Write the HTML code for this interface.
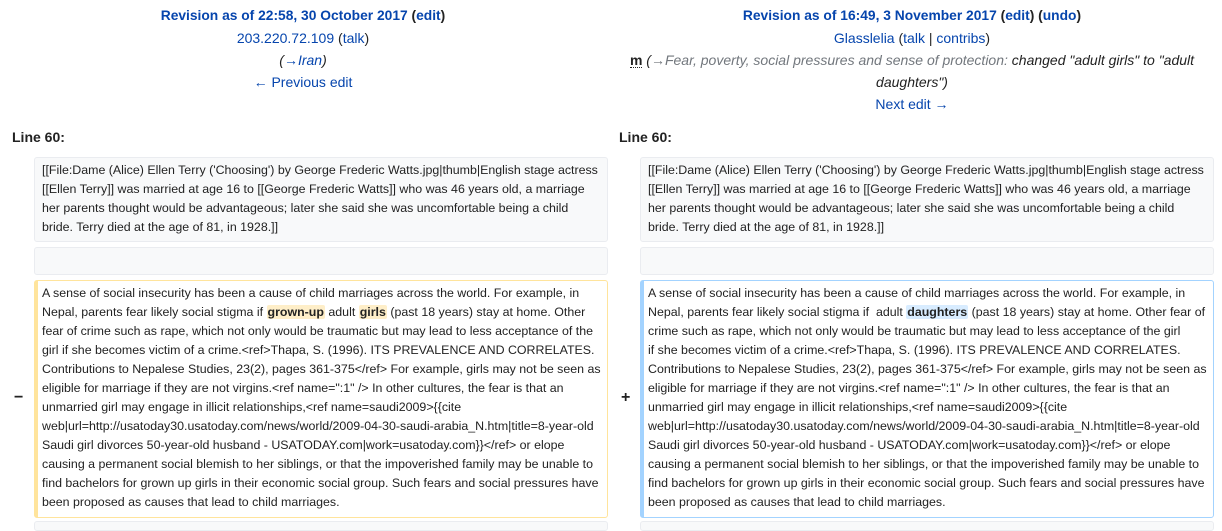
<!DOCTYPE html>
<html><head><meta charset="utf-8"><style>
body{margin:0;width:1222px;height:523px;overflow:hidden;background:#fff;font-family:"Liberation Sans",sans-serif;color:#222;font-size:14px;position:relative}
a{color:#0645ad;text-decoration:none}
.t{position:absolute;text-align:center;line-height:22px;font-size:14px}
.t b{font-size:13.8px}
.ln{position:absolute;font-weight:bold;font-size:14px}
.box{position:absolute;box-sizing:border-box;border:1px solid #eaecf0;border-radius:3px;background:#f8f9fa;font-size:12.4px;line-height:19px;padding:3px 7px;white-space:nowrap;overflow:hidden}
.del{background:#fff;border-color:#ffe49c;border-left-width:4px;padding-left:4px}
.add{background:#fff;border-color:#a3d3ff;border-left-width:4px;padding-left:4px}
.hd{background:#feeec8;font-weight:bold;border-radius:2px;padding:0 1px}
.ha{background:#d8ecff;font-weight:bold;border-radius:2px;padding:0 1px}
.m{position:absolute;font-weight:bold;font-size:16px}
</style></head><body>
<div class="t" style="left:0;width:606px;top:4px"><b><a>Revision as of 22:58, 30 October 2017</a> (<a>edit</a>)</b><br><a>203.220.72.109</a> (<a>talk</a>)<br><i>(<a>→Iran</a>)</i><br><a>← Previous edit</a></div>
<div class="t" style="left:612px;width:600px;top:4px"><b><a>Revision as of 16:49, 3 November 2017</a> (<a>edit</a>) (<a>undo</a>)</b><br><a>Glasslelia</a> (<a>talk</a> | <a>contribs</a>)<br><b style="border-bottom:1px dotted #222;line-height:14px;display:inline-block;font-size:14px">m</b> <i>(<a style="color:#72777d">→Fear, poverty, social pressures and sense of protection:</a> changed "adult girls" to "adult<br>daughters")</i><br><a>Next edit →</a></div>
<div class="ln" style="left:12px;top:129px">Line 60:</div>
<div class="ln" style="left:619px;top:129px">Line 60:</div>
<div class="box" style="left:34px;top:157px;width:574px;height:85px">[[File:Dame (Alice) Ellen Terry ('Choosing') by George Frederic Watts.jpg|thumb|English stage actress<br>[[Ellen Terry]] was married at age 16 to [[George Frederic Watts]] who was 46 years old, a marriage<br>her parents thought would be advantageous; later she said she was uncomfortable being a child<br>bride. Terry died at the age of 81, in 1928.]]</div>
<div class="box" style="left:640px;top:157px;width:574px;height:85px">[[File:Dame (Alice) Ellen Terry ('Choosing') by George Frederic Watts.jpg|thumb|English stage actress<br>[[Ellen Terry]] was married at age 16 to [[George Frederic Watts]] who was 46 years old, a marriage<br>her parents thought would be advantageous; later she said she was uncomfortable being a child<br>bride. Terry died at the age of 81, in 1928.]]</div>
<div class="box" style="left:34px;top:247px;width:574px;height:28px"></div>
<div class="box" style="left:640px;top:247px;width:574px;height:28px"></div>
<div class="m" style="left:14px;top:389px">−</div>
<div class="m" style="left:621px;top:389px">+</div>
<div class="box del" style="left:34px;top:280px;width:574px;height:238px">A sense of social insecurity has been a cause of child marriages across the world. For example, in<br>Nepal, parents fear likely social stigma if <span class="hd">grown-up</span> adult <span class="hd">girls</span> (past 18 years) stay at home. Other<br>fear of crime such as rape, which not only would be traumatic but may lead to less acceptance of the<br>girl if she becomes victim of a crime.&lt;ref&gt;Thapa, S. (1996). ITS PREVALENCE AND CORRELATES.<br>Contributions to Nepalese Studies, 23(2), pages 361-375&lt;/ref&gt; For example, girls may not be seen as<br>eligible for marriage if they are not virgins.&lt;ref name=":1" /&gt; In other cultures, the fear is that an<br>unmarried girl may engage in illicit relationships,&lt;ref name=saudi2009&gt;{{cite<br>web|url=http://usatoday30.usatoday.com/news/world/2009-04-30-saudi-arabia_N.htm|title=8-year-old<br>Saudi girl divorces 50-year-old husband - USATODAY.com|work=usatoday.com}}&lt;/ref&gt; or elope<br>causing a permanent social blemish to her siblings, or that the impoverished family may be unable to<br>find bachelors for grown up girls in their economic social group. Such fears and social pressures have<br>been proposed as causes that lead to child marriages.</div>
<div class="box add" style="left:640px;top:280px;width:574px;height:238px">A sense of social insecurity has been a cause of child marriages across the world. For example, in<br>Nepal, parents fear likely social stigma if &nbsp;adult <span class="ha">daughters</span> (past 18 years) stay at home. Other fear of<br>crime such as rape, which not only would be traumatic but may lead to less acceptance of the girl<br>if she becomes victim of a crime.&lt;ref&gt;Thapa, S. (1996). ITS PREVALENCE AND CORRELATES.<br>Contributions to Nepalese Studies, 23(2), pages 361-375&lt;/ref&gt; For example, girls may not be seen as<br>eligible for marriage if they are not virgins.&lt;ref name=":1" /&gt; In other cultures, the fear is that an<br>unmarried girl may engage in illicit relationships,&lt;ref name=saudi2009&gt;{{cite<br>web|url=http://usatoday30.usatoday.com/news/world/2009-04-30-saudi-arabia_N.htm|title=8-year-old<br>Saudi girl divorces 50-year-old husband - USATODAY.com|work=usatoday.com}}&lt;/ref&gt; or elope<br>causing a permanent social blemish to her siblings, or that the impoverished family may be unable to<br>find bachelors for grown up girls in their economic social group. Such fears and social pressures have<br>been proposed as causes that lead to child marriages.</div>
<div class="box" style="left:34px;top:521px;width:574px;height:10px"></div>
<div class="box" style="left:640px;top:521px;width:574px;height:10px"></div>
</body></html>
